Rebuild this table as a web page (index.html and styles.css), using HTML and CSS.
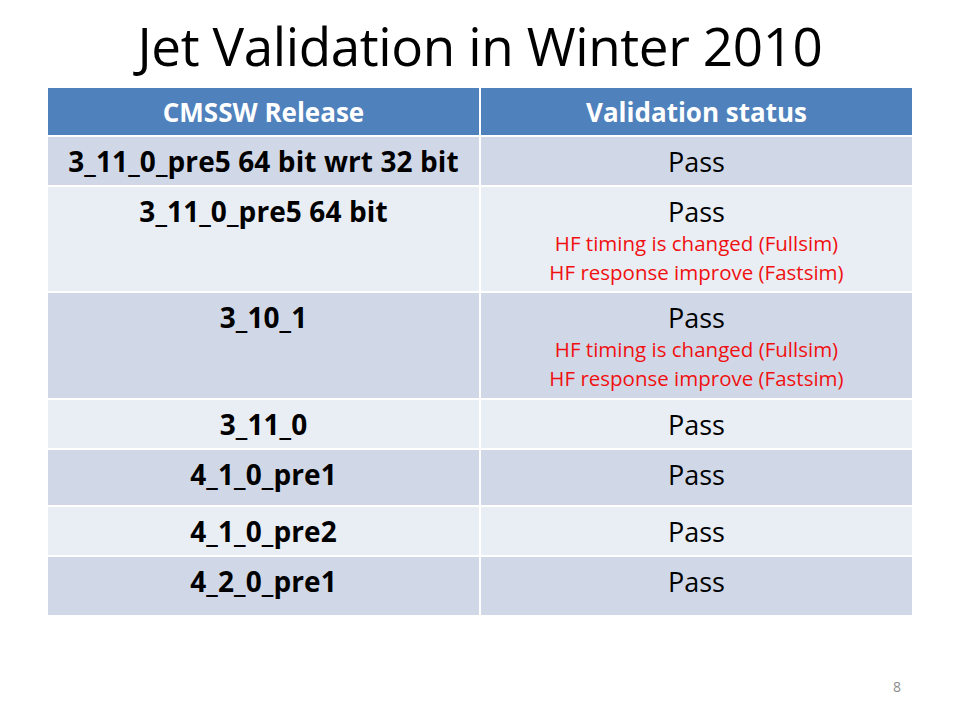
FILE: index.html
```html
<!DOCTYPE html>
<html>
<head>
<meta charset="utf-8">
<link rel="stylesheet" href="styles.css">
</head>
<body>
<div class="slide">
  <h1 class="title">Jet Validation in Winter 2010</h1>
  <div class="grid">
    <div class="cell head">CMSSW Release</div>
    <div class="cell head">Validation status</div>

    <div class="cell odd rel">3_11_0_pre5 64 bit wrt 32 bit</div>
    <div class="cell odd st"><span class="pass">Pass</span></div>

    <div class="cell even rel">3_11_0_pre5 64 bit</div>
    <div class="cell even st"><span class="pass">Pass</span><span class="note first">HF timing is changed (Fullsim)</span><span class="note">HF response improve (Fastsim)</span></div>

    <div class="cell odd rel">3_10_1</div>
    <div class="cell odd st"><span class="pass">Pass</span><span class="note first">HF timing is changed (Fullsim)</span><span class="note">HF response improve (Fastsim)</span></div>

    <div class="cell even rel">3_11_0</div>
    <div class="cell even st"><span class="pass">Pass</span></div>

    <div class="cell odd rel">4_1_0_pre1</div>
    <div class="cell odd st"><span class="pass">Pass</span></div>

    <div class="cell even rel">4_1_0_pre2</div>
    <div class="cell even st"><span class="pass">Pass</span></div>

    <div class="cell odd rel">4_2_0_pre1</div>
    <div class="cell odd st"><span class="pass">Pass</span></div>
  </div>
  <div class="pagenum">8</div>
</div>
</body>
</html>
```
FILE: styles.css
```css
html, body {
  margin: 0;
  padding: 0;
  background: #ffffff;
}
.slide {
  position: relative;
  width: 960px;
  height: 720px;
  font-family: "Open Sans", "Liberation Sans", sans-serif;
  overflow: hidden;
}
.title {
  margin: 0;
  padding-top: 13px;
  height: 88px;
  box-sizing: border-box;
  text-align: center;
  font-weight: 400;
  font-size: 53px;
  line-height: 66px;
  color: #000;
  letter-spacing: -0.4px;
}
.grid {
  margin-left: 48px;
  width: 864px;
  display: grid;
  grid-template-columns: 431px 431px;
  grid-template-rows: 47px 48px 104px 105px 48px 55px 48px 58px;
  gap: 2px;
  background: #ffffff;
}
.cell {
  text-align: center;
  color: #000;
  box-sizing: border-box;
}
.head {
  background: #4f81bd;
  color: #fff;
  font-weight: 700;
  font-size: 26px;
  line-height: 47px;
  padding-top: 1px;
}
.odd { background: #d0d8e8; }
.even { background: #e9edf4; }
.rel {
  font-weight: 700;
  font-size: 28px;
  line-height: 28px;
  padding-top: 10px;
  letter-spacing: 0.1px;
}
.st {
  padding-top: 10px;
}
.pass {
  display: block;
  font-size: 27px;
  line-height: 30px;
}
.note {
  display: block;
  color: #f01010;
  font-size: 20.5px;
  line-height: 29px;
}
.note.first {
  margin-top: 2px;
}
.pagenum {
  position: absolute;
  left: 880px;
  top: 677px;
  width: 34px;
  text-align: center;
  font-size: 14px;
  line-height: 20px;
  color: #8c8c8c;
}
```
